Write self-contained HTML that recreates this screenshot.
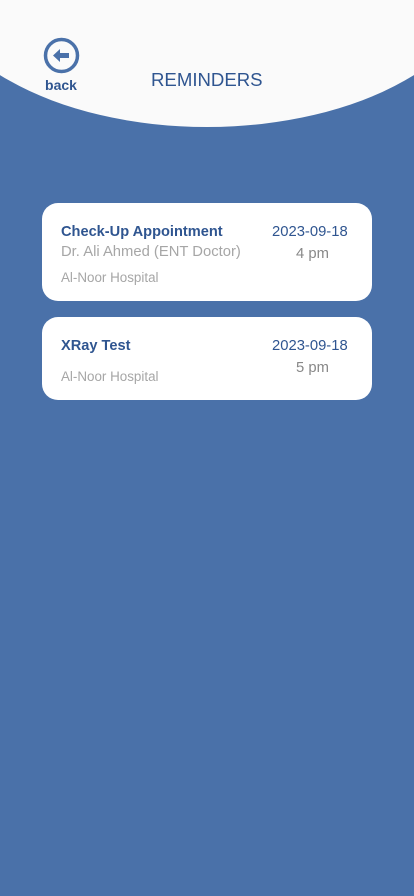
<!DOCTYPE html>
<html><head><meta charset="utf-8"><style>
body{margin:0;width:414px;height:896px;background:#4a71a9;font-family:"Liberation Sans",sans-serif;position:relative;overflow:hidden}
.ell{position:absolute;left:-73px;top:-191px;width:560px;height:318px;border-radius:50%;background:#fafafa}
.back{position:absolute;left:43px;top:37px;width:37px;text-align:center}
.back span{display:block;color:#2f5590;font-weight:bold;font-size:14px;margin-top:-2px;margin-left:-1px}
.title{position:absolute;left:151px;top:69px;color:#2f5590;font-size:18.6px}
.card{position:absolute;left:42px;width:330px;background:#fff;border-radius:16px}
.t{position:absolute;left:19px;color:#2f5590;font-weight:bold;font-size:14.6px}
.g{position:absolute;left:19px;color:#a6a6a6}
.d{position:absolute;left:230px;color:#2f5590;font-size:14.8px}
.tm{position:absolute;left:254px;color:#888;font-size:14.8px}
</style></head><body>
<div class="ell"></div>
<div class="back"><svg width="37" height="37" viewBox="0 0 37 37"><circle cx="18.5" cy="18.5" r="16" fill="none" stroke="#4a71a9" stroke-width="3.5"/><path d="M10 18.5 L17 12 V16 H26 V21 H17 V25 Z" fill="#4a71a9"/></svg><span>back</span></div>
<div class="title">REMINDERS</div>
<div class="card" style="top:203px;height:98px">
<div class="t" style="top:21px">Check-Up Appointment</div>
<div class="g" style="top:41px;font-size:14.8px">Dr. Ali Ahmed (ENT Doctor)</div>
<div class="g" style="top:67px;font-size:13.4px">Al-Noor Hospital</div>
<div class="d" style="top:21px">2023-09-18</div>
<div class="tm" style="top:43px">4 pm</div>
</div>
<div class="card" style="top:317px;height:83px">
<div class="t" style="top:21px">XRay Test</div>
<div class="g" style="top:52px;font-size:13.4px">Al-Noor Hospital</div>
<div class="d" style="top:21px">2023-09-18</div>
<div class="tm" style="top:43px">5 pm</div>
</div>
</body></html>
